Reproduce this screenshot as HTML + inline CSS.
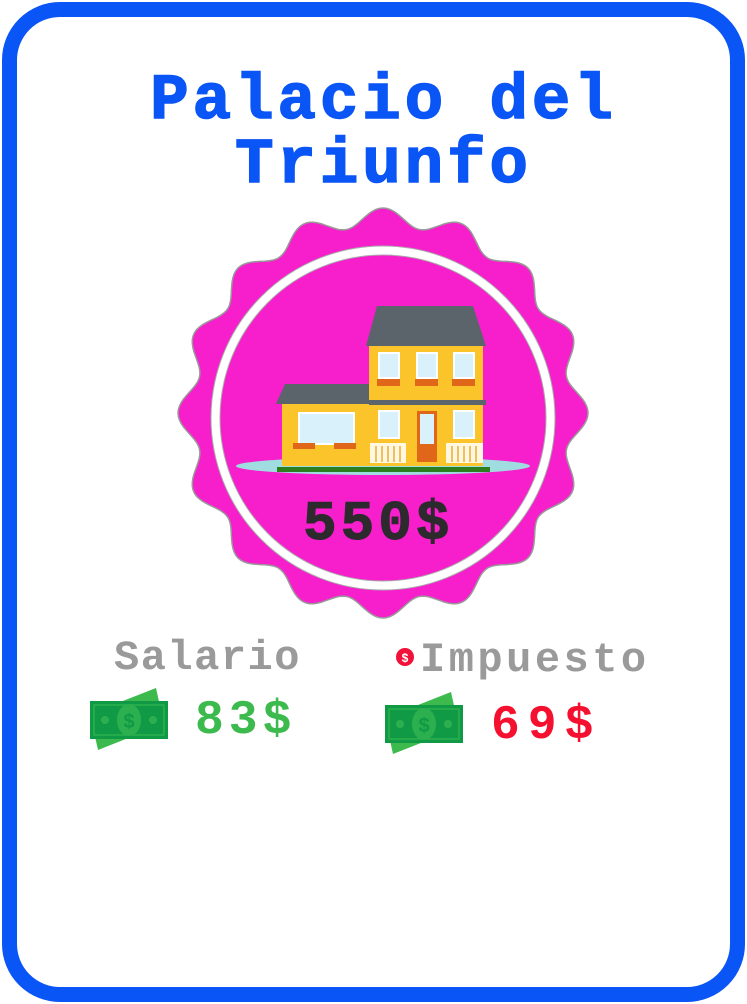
<!DOCTYPE html>
<html><head><meta charset="utf-8"><style>
html,body{margin:0;padding:0;background:#fff;}
body{width:747px;height:1004px;position:relative;overflow:hidden;font-family:"Liberation Mono",monospace;}
.card{position:absolute;left:2px;top:2px;width:713px;height:970px;border:15px solid #0a55f5;border-radius:58px;background:#fff;}
.t{position:absolute;left:10px;width:747px;text-align:center;color:#0a55f5;font-weight:bold;font-size:64px;line-height:64px;letter-spacing:4px;-webkit-text-stroke:1.5px #0a55f5;}
.lbl{position:absolute;color:#9a9a9a;font-weight:bold;font-size:42px;line-height:42px;letter-spacing:1px;}
.amt{position:absolute;font-weight:bold;font-size:46px;line-height:46px;letter-spacing:2px;}
</style></head><body>
<div class="card"></div>
<div class="t" style="top:70px">Palacio del</div>
<div class="t" style="top:134px">Triunfo</div>
<svg width="747" height="1004" style="position:absolute;left:0;top:0">
<path id="sc" fill="#f71ecb" stroke="#999" stroke-width="1.5" d="M0 0"/>
<circle cx="383" cy="418" r="172" fill="#fff" stroke="#aaa" stroke-width="1"/>
<circle cx="383" cy="418" r="163" fill="#f71ecb" stroke="#aaa" stroke-width="1"/>
<ellipse cx="383" cy="466" rx="147" ry="9" fill="#9fdde0"/>
<rect x="277" y="467" width="213" height="5" fill="#2e7d1e"/>
<polygon points="276,404 285,384 370,384 370,404" fill="#5a646a"/>
<rect x="282" y="404" width="88" height="62" fill="#fcc42b"/>
<rect x="299" y="413" width="55" height="31" fill="#d8f1fb" stroke="#fff" stroke-width="2"/>
<rect x="293" y="443" width="22" height="6" fill="#e0661a"/><rect x="334" y="443" width="22" height="6" fill="#e0661a"/>
<polygon points="366,346 377,306 473,306 486,346" fill="#5a646a"/>
<rect x="369" y="346" width="114" height="56" fill="#fcc42b"/>
<rect x="369" y="400" width="117" height="5" fill="#5a646a"/>
<rect x="369" y="405" width="114" height="61" fill="#fcc42b"/>
<rect x="379" y="353" width="20" height="25" fill="#d8f1fb" stroke="#fff" stroke-width="2"/>
<rect x="417" y="353" width="20" height="25" fill="#d8f1fb" stroke="#fff" stroke-width="2"/>
<rect x="454" y="353" width="20" height="25" fill="#d8f1fb" stroke="#fff" stroke-width="2"/>
<rect x="377" y="379" width="23" height="7" fill="#e0661a"/><rect x="415" y="379" width="23" height="7" fill="#e0661a"/><rect x="452" y="379" width="23" height="7" fill="#e0661a"/>
<rect x="379" y="411" width="20" height="27" fill="#d8f1fb" stroke="#fff" stroke-width="2"/>
<rect x="454" y="411" width="20" height="27" fill="#d8f1fb" stroke="#fff" stroke-width="2"/>
<rect x="417" y="411" width="20" height="51" fill="#e0661a"/>
<rect x="420" y="414" width="14" height="30" fill="#d8f1fb"/>
<rect x="370" y="443" width="36" height="20" fill="#fff7e0"/><rect x="446" y="443" width="37" height="20" fill="#fff7e0"/>
<g stroke="#f0c060" stroke-width="2"><path d="M376 446v16M382 446v16M388 446v16M394 446v16M400 446v16M452 446v16M458 446v16M464 446v16M470 446v16M476 446v16"/></g>
<g transform="translate(88,688)">
<polygon points="10,62 76,36 68,0 2,26" fill="#3dba4e"/>
<rect x="2" y="13" width="78" height="38" fill="#119a45"/>
<rect x="6" y="17" width="70" height="30" fill="none" stroke="#2cb04f" stroke-width="1.5"/>
<ellipse cx="41" cy="32" rx="12" ry="16" fill="#2cb04f"/>
<text x="41" y="40" text-anchor="middle" font-family="Liberation Sans" font-size="20" font-weight="bold" fill="#119a45">$</text>
<circle cx="17" cy="32" r="4" fill="#2cb04f"/><circle cx="65" cy="32" r="4" fill="#2cb04f"/>
</g>
<g transform="translate(383,692)">
<polygon points="10,62 76,36 68,0 2,26" fill="#3dba4e"/>
<rect x="2" y="13" width="78" height="38" fill="#119a45"/>
<rect x="6" y="17" width="70" height="30" fill="none" stroke="#2cb04f" stroke-width="1.5"/>
<ellipse cx="41" cy="32" rx="12" ry="16" fill="#2cb04f"/>
<text x="41" y="40" text-anchor="middle" font-family="Liberation Sans" font-size="20" font-weight="bold" fill="#119a45">$</text>
<circle cx="17" cy="32" r="4" fill="#2cb04f"/><circle cx="65" cy="32" r="4" fill="#2cb04f"/>
</g>
<circle cx="405" cy="657" r="9" fill="#f0123a"/>
<text x="405" y="662" text-anchor="middle" font-family="Liberation Sans" font-size="12" font-weight="bold" fill="#fff">$</text>
</svg>
<div class="amt" style="left:303px;top:496px;color:#2d2a2e;font-size:56px;line-height:56px;letter-spacing:4px;-webkit-text-stroke:1px #2d2a2e">550$</div>
<div class="lbl" style="left:114px;top:637px;letter-spacing:1.5px">Salario</div>
<div class="lbl" style="left:420px;top:639px;letter-spacing:3.5px">Impuesto</div>
<div class="amt" style="left:195px;top:698px;color:#3dba4e;letter-spacing:5px;font-size:48px">83$</div>
<div class="amt" style="left:491px;top:703px;color:#f5102f;letter-spacing:8px;font-size:48px">69$</div>
<script>
(function(){var cx=383,cy=413,d="";for(var i=0;i<=360;i++){var a=i*Math.PI/180;var r=196+9*Math.cos(16*a);var x=cx+r*Math.sin(a),y=cy-r*Math.cos(a);d+=(i?"L":"M")+x.toFixed(1)+" "+y.toFixed(1);}document.getElementById("sc").setAttribute("d",d+"Z");})();
</script>
</body></html>
